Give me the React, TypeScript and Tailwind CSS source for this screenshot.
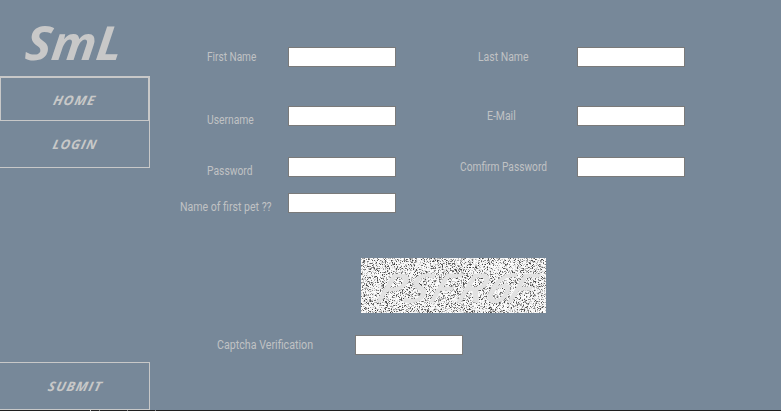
import { useEffect, useRef } from 'react';

type FieldProps = {
  label: string;
  labelClass: string;
  textClass: string;
  type?: string;
};

function Field({ label, labelClass, textClass, type = 'text' }: FieldProps) {
  return (
    <label className="flex h-5 items-start">
      <span className={`shrink-0 whitespace-nowrap leading-5 ${labelClass}`}>
        <span className={`inline-block origin-left ${textClass}`}>{label}</span>
      </span>
      <input type={type} className="h-5 w-[108px] shrink-0 border border-[#7a7a7a] bg-white px-1 text-black outline-none" />
    </label>
  );
}

function Captcha() {
  const ref = useRef<HTMLCanvasElement>(null);

  useEffect(() => {
    const ctx = ref.current?.getContext('2d');
    if (!ctx) return;
    const image = ctx.createImageData(185, 55);
    let seed = 7321;
    const random = () => {
      seed = (seed * 1664525 + 1013904223) >>> 0;
      return seed / 4294967296;
    };
    for (let i = 0; i < 185 * 55; i++) {
      const value = random() < 0.42 ? 255 - random() * 18 : 255 - Math.pow(random(), 1.8) * 195;
      image.data[i * 4] = value;
      image.data[i * 4 + 1] = value;
      image.data[i * 4 + 2] = value;
      image.data[i * 4 + 3] = 255;
    }
    ctx.putImageData(image, 0, 0);
  }, []);

  return (
    <div className="relative h-[55px] w-[185px] overflow-hidden">
      <canvas ref={ref} width={185} height={55} className="block" />
      <svg viewBox="0 0 185 55" className="absolute inset-0 h-[55px] w-[185px]" fill="#e2e2e2" stroke="#e2e2e2" strokeWidth="1" fontFamily="'Open Sans', sans-serif" fontWeight="500" fontStyle="italic">
        <text transform="translate(0 44) skewX(-20) scale(1.15 1)" fontSize="39" x="12 36 58 82 106 126">PSFR6F</text>
      </svg>
    </div>
  );
}

export default function App() {
  return (
    <div className="flex h-[411px] w-[781px] flex-col overflow-hidden bg-[#778899] font-['Roboto',sans-serif] text-xs text-[#c0c2c4]">
      <div className="flex h-[410px]">
        <aside className="flex w-[150px] shrink-0 flex-col font-['Open_Sans',sans-serif] font-bold italic text-[#c8c8c8]">
          <h1 className="h-[76px] pl-[26px] pt-[9px] font-['Noto_Sans',sans-serif] text-[47px] leading-[66px]">
            <span className="inline-block origin-left -skew-x-6 scale-x-[1.05]">SmL</span>
          </h1>
          <button className="flex h-[45px] items-center justify-center border border-r-2 border-t-2 border-[#c8c8c8] pt-[3px] text-[13px] tracking-[1px]">
            <span className="-skew-x-12 scale-x-[1.03]">HOME</span>
          </button>
          <button className="flex h-[47px] items-center justify-center border-b border-r border-[#c8c8c8] pl-[2px] pt-[2px] text-[13px] tracking-[1px]">
            <span className="-skew-x-12">LOGIN</span>
          </button>
          <button className="mt-[194px] flex h-12 items-center justify-center border-y border-r border-[#c8c8c8] pl-[2px] pt-[2px] text-[13px] tracking-[1px]">
            <span className="-skew-x-12 scale-x-[1.03]">SUBMIT</span>
          </button>
        </aside>
        <main className="flex-1 pt-[47px]">
          <div className="flex">
            <div className="w-[310px]">
              <Field label="First Name" labelClass="w-[138px] pl-[57px]" textClass="scale-x-[0.84]" />
              <div className="mt-[39px]"><Field label="Username" labelClass="w-[138px] pl-[57px] pt-1" textClass="scale-x-[0.86]" /></div>
              <div className="mt-[31px]"><Field label="Password" type="password" labelClass="w-[138px] pl-[57px] pt-1" textClass="scale-x-[0.86]" /></div>
              <div className="mt-4"><Field label="Name of first pet ??" labelClass="w-[138px] pl-[30px] pt-1" textClass="scale-x-[0.88]" /></div>
            </div>
            <div>
              <Field label="Last Name" labelClass="w-[117px] pl-[18px]" textClass="scale-x-[0.87]" />
              <div className="mt-[39px]"><Field label="E-Mail" labelClass="w-[117px] pl-[27px]" textClass="scale-x-[0.87]" /></div>
              <div className="mt-[31px]"><Field label="Comfirm Password" type="password" labelClass="w-[117px]" textClass="scale-x-[0.85]" /></div>
            </div>
          </div>
          <div className="pl-[211px] pt-[45px]"><Captcha /></div>
          <div className="pt-[22px]"><Field label="Captcha Verification" labelClass="w-[205px] pl-[67px]" textClass="scale-x-[0.89]" /></div>
        </main>
      </div>
      <div className="flex h-px bg-[#202020]">
        <i className="ml-[90px] h-px w-px bg-[#c8c8c8]" />
        <i className="ml-2 h-px w-px bg-[#888888]" />
        <i className="ml-[27px] h-px w-px bg-[#888888]" />
        <i className="ml-[27px] h-px w-px bg-[#888888]" />
      </div>
    </div>
  );
}
